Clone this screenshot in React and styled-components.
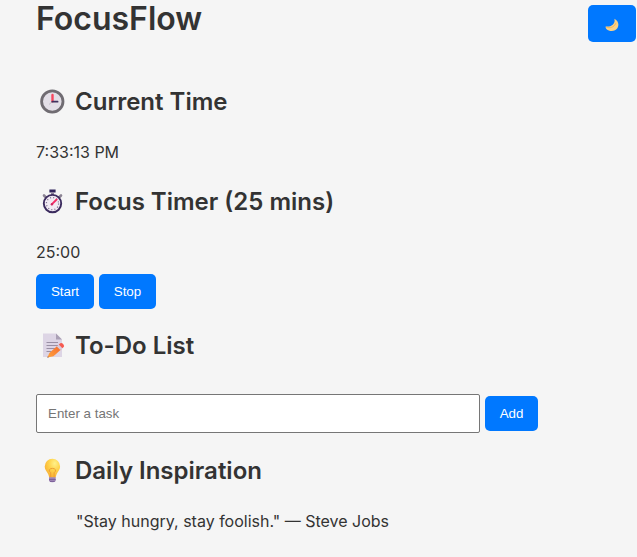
import React from "react";
import styled, { createGlobalStyle } from "styled-components";

const GlobalStyle = createGlobalStyle`
  * { box-sizing: border-box; }
  body {
    margin: 0;
    background: #f5f5f5;
    color: #333;
    font: 400 16px/26px Inter, sans-serif;
    overflow: hidden;
  }
`;

const Page = styled.main`
  height: 557px;
  padding: 5px 1px 0 36px;
`;

const Header = styled.header`
  display: flex;
  justify-content: space-between;
  height: 37px;
`;

const Title = styled.h1`
  margin: -5px 0 0;
  font-size: 32px;
  line-height: 38px;
  font-weight: 600;
`;

const Section = styled.section`
  padding-top: ${(p) => p.$top}px;
`;

const Heading = styled.h2`
  display: flex;
  align-items: center;
  gap: 7px;
  margin: 0;
  height: 38px;
  font-size: 24px;
  line-height: 38px;
  font-weight: 600;
`;

const Icon = styled.svg`
  width: 32px;
  height: 32px;
  flex: none;
`;

const Text = styled.p`
  margin: 18px 0 0;
`;

const Quote = styled.blockquote`
  margin: 18px 40px 0;
`;

const Row = styled.div`
  display: flex;
  align-items: center;
  gap: 5px;
  margin-top: ${(p) => p.$top}px;
`;

const Button = styled.button`
  width: ${(p) => p.$width}px;
  height: ${(p) => p.$height || 35}px;
  display: flex;
  align-items: center;
  justify-content: center;
  padding: 0;
  border: 0;
  border-radius: 5px;
  background: #0078ff;
  color: #fff;
  font: 400 13.333px "Liberation Sans", Arial, sans-serif;
  cursor: pointer;
`;

const MoonIcon = styled.svg`
  width: 14px;
  height: 14px;
  margin-top: 2px;
`;

const TaskInput = styled.input`
  width: 444px;
  height: 39px;
  padding: 0 11px;
  border: 1px solid #767676;
  border-radius: 2px;
  background: #fff;
  font: 400 13.333px "Liberation Sans", Arial, sans-serif;
  &::placeholder { color: #757575; }
`;

const Clock = () => (
  <Icon viewBox="0 0 32 32">
    <circle cx="16.3" cy="15.5" r="10.7" fill="#e3dfe7" stroke="#706c72" strokeWidth="2.8" />
    <path d="M16.4 15.5 13 18.5" stroke="#c2bcc8" strokeWidth="1" />
    <path d="M16.5 9v6.3" stroke="#f8475f" strokeWidth="2.4" strokeLinecap="round" />
    <path d="M16.3 15.7H21.6" stroke="#40325f" strokeWidth="1.7" strokeLinecap="round" />
  </Icon>
);

const Stopwatch = () => (
  <Icon viewBox="0 0 32 32">
    <path d="M13.4 3.6h6.2v3h-6.2z" fill="#30245c" />
    <path d="M15 6.6h3v3h-3z" fill="#8d829b" />
    <path d="m8 9.5 2 2M25 9.5l-2 2" stroke="#8b8393" strokeWidth="2.6" strokeLinecap="round" />
    <circle cx="16.5" cy="17.6" r="8.7" fill="#f1eaf3" stroke="#3b2b5e" strokeWidth="1.9" />
    <circle cx="16.5" cy="17.6" r="6.1" fill="none" stroke="#75688b" strokeWidth="1.2" strokeDasharray="1 2.193" />
    <path d="m16 18.2 4.6-4.7" stroke="#f52d66" strokeWidth="1.9" strokeLinecap="round" />
    <circle cx="15.9" cy="18.3" r="1.2" fill="#cf2862" />
  </Icon>
);

const Memo = () => (
  <Icon viewBox="0 -0.5 32 32">
    <defs>
      <linearGradient id="pencil" x1="0" y1="1" x2="1" y2="0">
        <stop stopColor="#ffa33c" />
        <stop offset="1" stopColor="#f56730" />
      </linearGradient>
    </defs>
    <path d="M7 3h13l6 6v17.5H7z" fill="#ddd5e5" />
    <path d="M20 3v6h6z" fill="#aaa0b5" />
    <path d="M10.5 12H22M10.5 15h11.5M10.5 18h9M10.5 21h5" stroke="#998fa4" strokeWidth="1" />
    <path d="m21.7 15 3.7 3.8-8 7-6 1.2 2-4.6z" fill="url(#pencil)" />
    <path d="m20.7 15.9 2.2-1.9 3.6 3.8-2.1 1.8z" fill="#d8cbdc" />
    <path d="m22.8 14 1.5-1.3q1.7-.5 3.2 1.2 1.2 1.6.2 2.7l-1.3 1.2z" fill="#f65a50" />
    <path d="m11.8 25.8 1 1-1.4.5z" fill="#6d4650" />
  </Icon>
);

const Bulb = () => (
  <Icon viewBox="0 0 32 32">
    <defs>
      <radialGradient id="bulb" cx="65%" cy="25%" r="75%">
        <stop stopColor="#fff18a" />
        <stop offset=".5" stopColor="#ffd24a" />
        <stop offset="1" stopColor="#f8af34" />
      </radialGradient>
    </defs>
    <path d="M16.4 3.7a7.7 7.7 0 0 1 7.7 7.7c0 3.2-2.2 5-3.4 7.5-.7 1.5-.9 3.1-1.2 3.9h-6.2c-.3-.9-.5-2.5-1.2-3.9-1.2-2.5-3.4-4.3-3.4-7.5a7.7 7.7 0 0 1 7.7-7.7Z" fill="url(#bulb)" />
    <path d="M14.7 22v-4.3q-2-1.4-1.3-3 .8-1.3 3-1.3t3 1.3q.7 1.6-1.3 3V22" fill="none" stroke="#ed9f35" strokeWidth="1" />
    <path d="M13 22.3h6.7V26q-1.2 1.2-3.4 1.2T13 26z" fill="#9d83b4" />
    <path d="M13 24.5h6.7M14 26.5h4.7" stroke="#765a94" strokeWidth=".8" />
  </Icon>
);

export default function App() {
  return (
    <>
      <GlobalStyle />
      <Page>
        <Header>
          <Title>FocusFlow</Title>
          <Button $width={48} $height={37} aria-label="Toggle theme">
            <MoonIcon viewBox="0 0 14 14">
              <path d="M9.4.8c3.8 1.9 5 5.8 3.1 9.1-2.2 3.6-7.8 4.1-11.1 1-.7-.8-1-1.8-.7-2.5 2.4.6 5.2-.1 7-1.7 1.8-1.6 2.2-3.6 1.7-5.9Z" fill="#fbd185" />
              <path d="M1.2 9.1c3.7 1.5 8.1.1 9.5-3.8" fill="none" stroke="#e9a850" strokeWidth=".7" />
            </MoonIcon>
          </Button>
        </Header>
        <Section $top={41}>
          <Heading><Clock />Current Time</Heading>
          <Text>7:33:13 PM</Text>
        </Section>
        <Section $top={18}>
          <Heading><Stopwatch />Focus Timer (25 mins)</Heading>
          <Text>25:00</Text>
          <Row $top={9}>
            <Button $width={58}>Start</Button>
            <Button $width={57}>Stop</Button>
          </Row>
        </Section>
        <Section $top={18}>
          <Heading><Memo />To-Do List</Heading>
          <Row $top={29}>
            <TaskInput placeholder="Enter a task" />
            <Button $width={53}>Add</Button>
          </Row>
        </Section>
        <Section $top={19}>
          <Heading><Bulb />Daily Inspiration</Heading>
          <Quote>"Stay hungry, stay foolish." — Steve Jobs</Quote>
        </Section>
      </Page>
    </>
  );
}
